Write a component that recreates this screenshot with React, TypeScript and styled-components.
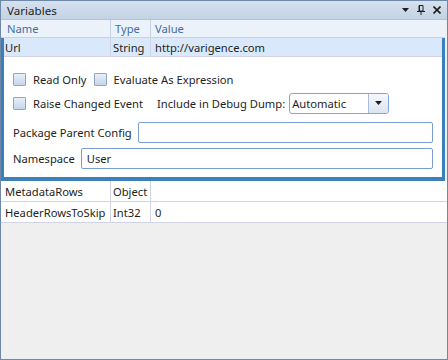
import styled, { createGlobalStyle } from "styled-components";

const GlobalStyle = createGlobalStyle`
  html, body {
    margin: 0;
    padding: 0;
    background: #ffffff;
  }
  * {
    box-sizing: border-box;
  }
`;

const Window = styled.div`
  width: 448px;
  height: 360px;
  display: flex;
  flex-direction: column;
  border: 1px solid #6f88a8;
  font-family: "Noto Sans", "Open Sans", sans-serif;
  font-size: 11.2px;
  color: #1e1e1e;
  overflow: hidden;
`;

const TitleBar = styled.div`
  height: 19px;
  display: flex;
  align-items: center;
  padding: 0 6px 0 6px;
  background: linear-gradient(to bottom, #d6e1ee, #c3d2e4);
  border-bottom: 1px solid #b4c4d8;
`;

const Title = styled.span`
  flex: 1;
  font-size: 11.6px;
  line-height: 19px;
`;

const TitleIcons = styled.div`
  display: flex;
  align-items: center;
  gap: 8px;
`;

const Grid = styled.div`
  flex: 1;
  display: flex;
  flex-direction: column;
  background: #efefef;
`;

const Row = styled.div<{ $height?: number }>`
  display: grid;
  grid-template-columns: 110px 40px 1fr;
  height: ${(p) => p.$height ?? 21}px;
  background: #ffffff;
  border-bottom: 1px solid #d3d3e6;
`;

const Cell = styled.div<{ $header?: boolean; $last?: boolean; $pad?: number }>`
  display: flex;
  align-items: center;
  padding-left: ${(p) => p.$pad ?? 3}px;
  border-right: ${(p) => (p.$last ? "none" : "1px solid #d3d3e6")};
  color: ${(p) => (p.$header ? "#3f6fa5" : "#1e1e1e")};
  white-space: nowrap;
  overflow: hidden;
`;

const HeaderRow = styled(Row)`
  background: #ecf2fa;
  border-bottom: 1px solid #c5d3e4;
  margin-right: 2px;

  ${Cell} {
    border-right-color: #c5d3e4;
  }
`;

const Selected = styled.div`
  display: flex;
  flex-direction: column;
  border: 3px solid #3b80ba;
  border-top: none;
  border-bottom-width: 4px;
  margin-right: 2px;
`;

const SelectedRow = styled(Row)`
  background: #d9e9fb;
  grid-template-columns: 107px 40px 1fr;
  height: 19px;
`;

const Details = styled.div`
  display: flex;
  flex-direction: column;
  background: #ffffff;
  padding: 12px 9px 8px 9px;
`;

const Line = styled.div<{ $height: number; $gap?: number }>`
  display: flex;
  align-items: center;
  height: ${(p) => p.$height}px;
  margin-bottom: ${(p) => p.$gap ?? 0}px;
`;

const CheckLabel = styled.label<{ $spacing?: number }>`
  display: flex;
  align-items: center;
  gap: 7px;
  margin-right: ${(p) => p.$spacing ?? 0}px;
`;

const Box = styled.span`
  width: 13px;
  height: 13px;
  border: 1px solid #8ea7c8;
  border-radius: 1px;
  background: linear-gradient(to bottom, #e8eff9, #c4d5eb);
`;

const Combo = styled.div`
  margin-left: 4px;
  width: 100px;
  height: 21px;
  display: flex;
  border: 1px solid #84a5d8;
  border-radius: 3px;
  background: #ffffff;
  overflow: hidden;
`;

const ComboText = styled.span`
  flex: 1;
  padding-left: 2px;
  line-height: 19px;
`;

const ComboButton = styled.span`
  width: 20px;
  display: flex;
  align-items: center;
  justify-content: center;
  border-left: 1px solid #a9bedf;
  background: linear-gradient(to bottom, #f6f8fc, #dbe4f0);
`;

const Field = styled.div<{ $gap: number }>`
  flex: 1;
  height: 21px;
  margin-left: ${(p) => p.$gap}px;
  border: 1px solid #7a9dd6;
  border-radius: 2px;
  padding-left: 5px;
  line-height: 19px;
  background: #ffffff;
`;

const Arrow = () => (
  <svg width="7" height="4" viewBox="0 0 7 4">
    <path d="M0 0H7L3.5 4Z" fill="#1e1e1e" />
  </svg>
);

const PinIcon = () => (
  <svg width="8" height="10" viewBox="0 0 8 10">
    <path d="M2 0.5H6V6H2Z M2.5 0.5V6" fill="none" stroke="#1e1e1e" strokeWidth="1" />
    <path d="M0 6.5H8" stroke="#1e1e1e" strokeWidth="1" />
    <path d="M4 6.5V10" stroke="#1e1e1e" strokeWidth="1" />
  </svg>
);

const CloseIcon = () => (
  <svg width="8" height="8" viewBox="0 0 8 8">
    <path d="M0.5 0.5L7.5 7.5M7.5 0.5L0.5 7.5" stroke="#1e1e1e" strokeWidth="1.6" />
  </svg>
);

const App = () => {
  return (
    <>
      <GlobalStyle />
      <Window>
        <TitleBar>
          <Title>Variables</Title>
          <TitleIcons>
            <Arrow />
            <PinIcon />
            <CloseIcon />
          </TitleIcons>
        </TitleBar>
        <Grid>
          <HeaderRow $height={18}>
            <Cell $header $pad={6}>
              Name
            </Cell>
            <Cell $header $pad={4}>
              Type
            </Cell>
            <Cell $header $last $pad={4}>
              Value
            </Cell>
          </HeaderRow>
          <Selected>
            <SelectedRow>
              <Cell $pad={1}>Url</Cell>
              <Cell $pad={2}>String</Cell>
              <Cell $last $pad={4}>
                http://varigence.com
              </Cell>
            </SelectedRow>
            <Details>
              <Line $height={20} $gap={3}>
                <CheckLabel $spacing={7}>
                  <Box />
                  Read Only
                </CheckLabel>
                <CheckLabel>
                  <Box />
                  Evaluate As Expression
                </CheckLabel>
              </Line>
              <Line $height={22} $gap={8}>
                <CheckLabel $spacing={14}>
                  <Box />
                  Raise Changed Event
                </CheckLabel>
                <span>Include in Debug Dump:</span>
                <Combo>
                  <ComboText>Automatic</ComboText>
                  <ComboButton>
                    <Arrow />
                  </ComboButton>
                </Combo>
              </Line>
              <Line $height={21} $gap={5}>
                <span>Package Parent Config</span>
                <Field $gap={6} />
              </Line>
              <Line $height={21}>
                <span>Namespace</span>
                <Field $gap={6}>User</Field>
              </Line>
            </Details>
          </Selected>
          <Row>
            <Cell $pad={4}>MetadataRows</Cell>
            <Cell $pad={2}>Object</Cell>
            <Cell $last $pad={4} />
          </Row>
          <Row>
            <Cell $pad={4}>HeaderRowsToSkip</Cell>
            <Cell $pad={2}>Int32</Cell>
            <Cell $last $pad={4}>
              0
            </Cell>
          </Row>
        </Grid>
      </Window>
    </>
  );
};

export default App;
